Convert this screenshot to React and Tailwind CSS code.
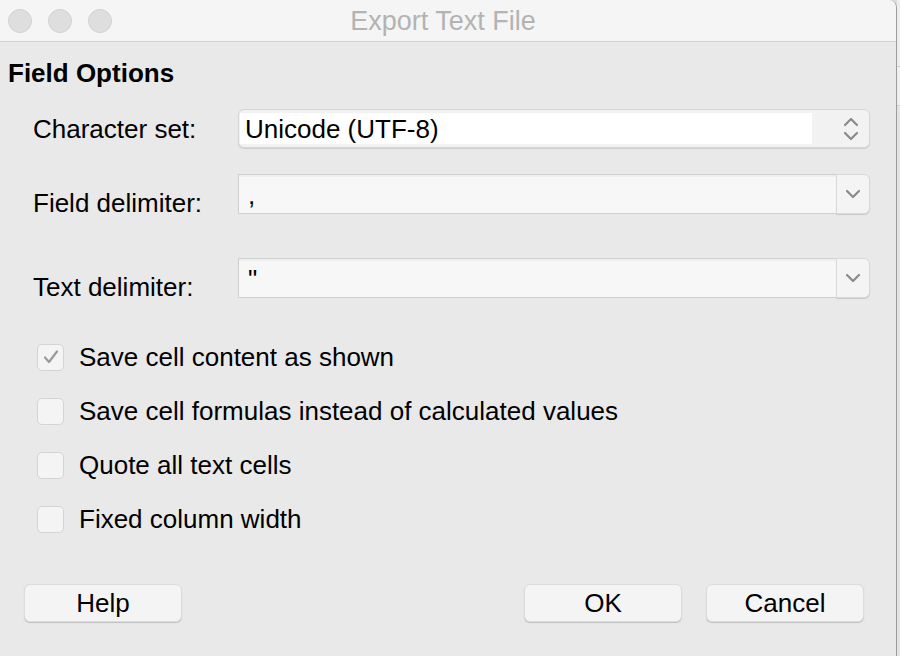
import React, { useState } from 'react'

const font = { fontFamily: '"Liberation Sans", Arial, sans-serif' }

function Chevron({ up = false }) {
  return (
    <svg width="16" height="10" viewBox="0 0 16 10" fill="none">
      <path
        d={up ? 'M2 8 L8 2 L14 8' : 'M2 2 L8 8 L14 2'}
        stroke="#8a8a8a"
        strokeWidth="2.2"
        strokeLinecap="round"
        strokeLinejoin="round"
      />
    </svg>
  )
}

function Checkbox({ checked, label, onChange }) {
  return (
    <label className="flex items-center h-[54px] cursor-default" onClick={onChange}>
      <span className="w-[27px] h-[27px] ml-[37px] rounded-[5px] border border-[#d4d4d4] bg-[#f4f4f4] flex items-center justify-center">
        {checked && (
          <svg width="16" height="14" viewBox="0 0 16 14" fill="none">
            <path d="M2 7.5 L6 12 L14 1.5" stroke="#9a9a9a" strokeWidth="2.2" strokeLinecap="round" strokeLinejoin="round" />
          </svg>
        )}
      </span>
      <span className="ml-[15px] text-[26px] text-black leading-none">{label}</span>
    </label>
  )
}

function DropField({ value }) {
  return (
    <div className="flex h-[40px] flex-1">
      <div className="flex-1 border border-[#cfcfcf] border-r-0 bg-[#f7f7f7] shadow-[inset_0_2px_0_#efefef] pl-[9px] pt-[7px] text-[26px] leading-none text-black">
        {value}
      </div>
      <div className="w-[34px] rounded-r-[6px] bg-[#f4f4f4] border border-[#d9d9d9] shadow-[0_1px_1px_rgba(0,0,0,0.15)] flex items-center justify-center">
        <Chevron />
      </div>
    </div>
  )
}

function Button({ children }) {
  return (
    <button className="w-[158px] h-[38px] rounded-[6px] bg-[#f4f4f4] border border-[#dcdcdc] shadow-[0_1px_1px_rgba(0,0,0,0.18)] text-[26px] text-black leading-none">
      {children}
    </button>
  )
}

export default function App() {
  const [checks, setChecks] = useState([true, false, false, false])
  const toggle = (i) => setChecks(checks.map((c, j) => (j === i ? !c : c)))
  const labels = [
    'Save cell content as shown',
    'Save cell formulas instead of calculated values',
    'Quote all text cells',
    'Fixed column width',
  ]

  return (
    <div className="w-[900px] h-[656px] flex bg-[#dcdcdc] overflow-hidden" style={font}>
      <div className="w-[897px] h-[656px] flex flex-col bg-[#e9e9e9] border-r border-[#9c9c9c] rounded-tr-[8px] overflow-hidden">
        {/* title bar */}
        <div className="relative h-[42px] bg-[#f5f5f5] border-b border-[#d3d3d3] flex items-center">
          <div className="flex gap-[16px] pl-[8px]">
            <span className="w-[24px] h-[24px] rounded-full bg-[#dedede] border border-[#d2d2d2]" />
            <span className="w-[24px] h-[24px] rounded-full bg-[#dedede] border border-[#d2d2d2]" />
            <span className="w-[24px] h-[24px] rounded-full bg-[#dedede] border border-[#d2d2d2]" />
          </div>
          <div className="absolute inset-0 flex items-center justify-center pr-[10px] pt-[2px] text-[27px] text-[#b3b3b3]">
            Export Text File
          </div>
        </div>

        {/* body */}
        <div className="flex-1 flex flex-col">
          <div className="pl-[8px] pt-[18px] text-[26px] font-bold text-black leading-none">Field Options</div>

          <div className="grid grid-cols-[238px_1fr] pr-[26px] mt-[23px] items-center">
            <div className="pl-[33px] text-[26px] leading-none">Character set:</div>
            <div className="h-[39px] rounded-[6px] border border-[#d6d6d6] bg-[#f2f2f2] shadow-[0_1px_1px_rgba(0,0,0,0.12)] flex overflow-hidden">
              <div className="flex-1 bg-white mt-[3px] mb-[3px] ml-[1px] pl-[5px] flex items-center text-[26px] leading-none text-black">
                Unicode (UTF-8)
              </div>
              <div className="w-[57px] flex flex-col items-center justify-center gap-[4px] pl-[20px]">
                <Chevron up />
                <Chevron />
              </div>
            </div>
          </div>

          <div className="grid grid-cols-[238px_1fr] pr-[26px] mt-[26px] items-start">
            <div className="pl-[33px] text-[26px] leading-none pt-[16px]">Field delimiter:</div>
            <DropField value="," />
          </div>

          <div className="grid grid-cols-[238px_1fr] pr-[26px] mt-[42px] items-start">
            <div className="pl-[33px] text-[26px] leading-none pt-[16px]">Text delimiter:</div>
            <DropField value={'"'} />
          </div>

          <div className="flex flex-col mt-[30px]">
            {labels.map((l, i) => (
              <Checkbox key={l} label={l} checked={checks[i]} onChange={() => toggle(i)} />
            ))}
          </div>

          <div className="flex items-center mt-[38px] pl-[24px] pr-[32px]">
            <Button>Help</Button>
            <div className="flex-1" />
            <div className="flex gap-[24px]">
              <Button>OK</Button>
              <Button>Cancel</Button>
            </div>
          </div>
        </div>
      </div>
      <div className="flex-1 flex flex-col">
        <div className="h-[66px] bg-[#eeeeee]" />
        <div className="h-[40px] bg-[#f0f0f0] border-y border-[#cfcfcf]" />
        <div className="flex-1 bg-[#e4e4e4]" />
      </div>
    </div>
  )
}
